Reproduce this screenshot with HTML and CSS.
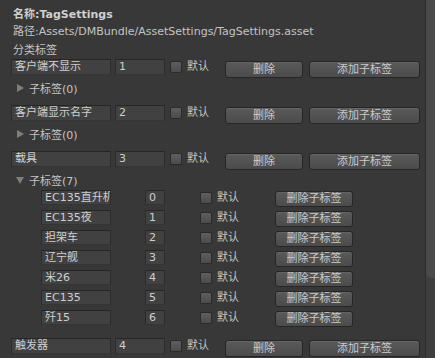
FILE: index.html
```html
<!DOCTYPE html>
<html>
<head>
<meta charset="utf-8">
<link rel="stylesheet" href="styles.css">
</head>
<body>
<div class="window">
  <div class="content">
    <div class="line bold">名称:TagSettings</div>
    <div class="line">路径:Assets/DMBundle/AssetSettings/TagSettings.asset</div>
    <div class="line section">分类标签</div>

    <div class="group">
      <div class="row">
        <div class="field name">客户端不显示</div>
        <div class="field num">1</div>
        <div class="check"></div><span class="lbl">默认</span>
        <div class="btn del">删除</div>
        <div class="btn add">添加子标签</div>
      </div>
      <div class="fold"><span class="tri right"></span>子标签(0)</div>
    </div>

    <div class="group">
      <div class="row">
        <div class="field name">客户端显示名字</div>
        <div class="field num">2</div>
        <div class="check"></div><span class="lbl">默认</span>
        <div class="btn del">删除</div>
        <div class="btn add">添加子标签</div>
      </div>
      <div class="fold"><span class="tri right"></span>子标签(0)</div>
    </div>

    <div class="group">
      <div class="row">
        <div class="field name">载具</div>
        <div class="field num">3</div>
        <div class="check"></div><span class="lbl">默认</span>
        <div class="btn del">删除</div>
        <div class="btn add">添加子标签</div>
      </div>
      <div class="fold open"><span class="tri down"></span>子标签(7)</div>
      <div class="children">
        <div class="crow"><div class="field cname">EC135直升机</div><div class="field cnum">0</div><div class="check"></div><span class="lbl">默认</span><div class="btn cdel">删除子标签</div></div>
        <div class="crow"><div class="field cname">EC135夜</div><div class="field cnum">1</div><div class="check"></div><span class="lbl">默认</span><div class="btn cdel">删除子标签</div></div>
        <div class="crow"><div class="field cname">担架车</div><div class="field cnum">2</div><div class="check"></div><span class="lbl">默认</span><div class="btn cdel">删除子标签</div></div>
        <div class="crow"><div class="field cname">辽宁舰</div><div class="field cnum">3</div><div class="check"></div><span class="lbl">默认</span><div class="btn cdel">删除子标签</div></div>
        <div class="crow"><div class="field cname">米26</div><div class="field cnum">4</div><div class="check"></div><span class="lbl">默认</span><div class="btn cdel">删除子标签</div></div>
        <div class="crow"><div class="field cname">EC135</div><div class="field cnum">5</div><div class="check"></div><span class="lbl">默认</span><div class="btn cdel">删除子标签</div></div>
        <div class="crow"><div class="field cname">歼15</div><div class="field cnum">6</div><div class="check"></div><span class="lbl">默认</span><div class="btn cdel">删除子标签</div></div>
      </div>
    </div>

    <div class="group">
      <div class="row">
        <div class="field name">触发器</div>
        <div class="field num">4</div>
        <div class="check"></div><span class="lbl">默认</span>
        <div class="btn del">删除</div>
        <div class="btn add">添加子标签</div>
      </div>
    </div>
  </div>
  <div class="scrollbar"><div class="thumb"></div></div>
</div>
</body>
</html>
```
FILE: styles.css
```css
html, body {
  margin: 0;
  padding: 0;
  background: #383838;
}
.window {
  display: flex;
  width: 435px;
  height: 358px;
  overflow: hidden;
  font-family: "DejaVu Sans", "Noto Sans CJK SC", sans-serif;
  font-size: 11px;
  color: #c4c4c4;
}
.content {
  flex: 1;
  padding: 6px 0 0 13px;
  min-width: 0;
}
.line {
  height: 17px;
  line-height: 17px;
  white-space: nowrap;
}
.section { height: 19px; line-height: 21px; }
.bold { font-weight: bold; color: #d0d0d0; }
.row, .crow {
  display: flex;
  align-items: flex-start;
  height: 20px;
}
.row { margin-left: -2px; }
.field {
  box-sizing: border-box;
  height: 16px;
  line-height: 14px;
  padding: 0 3px;
  background: #414141;
  border: 1px solid #2c2c2c;
  border-top-color: #262626;
  border-bottom-color: #353535;
  color: #cfcfcf;
  white-space: nowrap;
  overflow: hidden;
}
.name { width: 100px; }
.num { width: 50px; margin-left: 4px; }
.check {
  box-sizing: border-box;
  width: 12px;
  height: 12px;
  margin-top: 2px;
  border-radius: 2px;
  border: 1px solid #2a2a2a;
  background: linear-gradient(#5e5e5e, #4c4c4c);
}
.row .check { margin-left: 5px; }
.lbl {
  margin-left: 5px;
  line-height: 16px;
  color: #c4c4c4;
}
.btn {
  box-sizing: border-box;
  height: 17px;
  margin-top: 2px;
  line-height: 15px;
  text-align: center;
  border-radius: 3px;
  border: 1px solid #262626;
  background: linear-gradient(#5a5a5a, #4b4b4b);
  box-shadow: inset 0 1px 0 #646464;
  color: #cacaca;
}
.del { width: 78px; margin-left: 16px; }
.add { width: 111px; margin-left: 6px; }
.fold {
  display: flex;
  align-items: center;
  height: 18px;
  margin-left: 4px;
  margin-bottom: 8px;
}
.fold.open { margin-bottom: 1px; }
.tri {
  display: inline-block;
  width: 0;
  height: 0;
  margin-right: 5px;
}
.tri.right {
  border-top: 4px solid transparent;
  border-bottom: 4px solid transparent;
  border-left: 7px solid #7e7e7e;
}
.tri.down {
  margin-left: -1px;
  border-left: 4px solid transparent;
  border-right: 4px solid transparent;
  border-top: 7px solid #7e7e7e;
}
.children { margin-bottom: 8px; }
.crow { margin-left: 28px; }
.cname { width: 70px; height: 15px; }
.cnum { width: 20px; height: 15px; margin-left: 34px; }
.crow .field { line-height: 13px; }
.crow .check { margin-left: 35px; }
.cdel { width: 78px; margin-left: 36px; margin-top: 1px; height: 16px; line-height: 14px; }
.scrollbar {
  width: 10px;
  background: #3e3e3e;
  border-left: 1px solid #2e2e2e;
  box-sizing: border-box;
}
.thumb {
  height: 278px;
  background: #4a4a4a;
  border-bottom-left-radius: 5px;
}
```
